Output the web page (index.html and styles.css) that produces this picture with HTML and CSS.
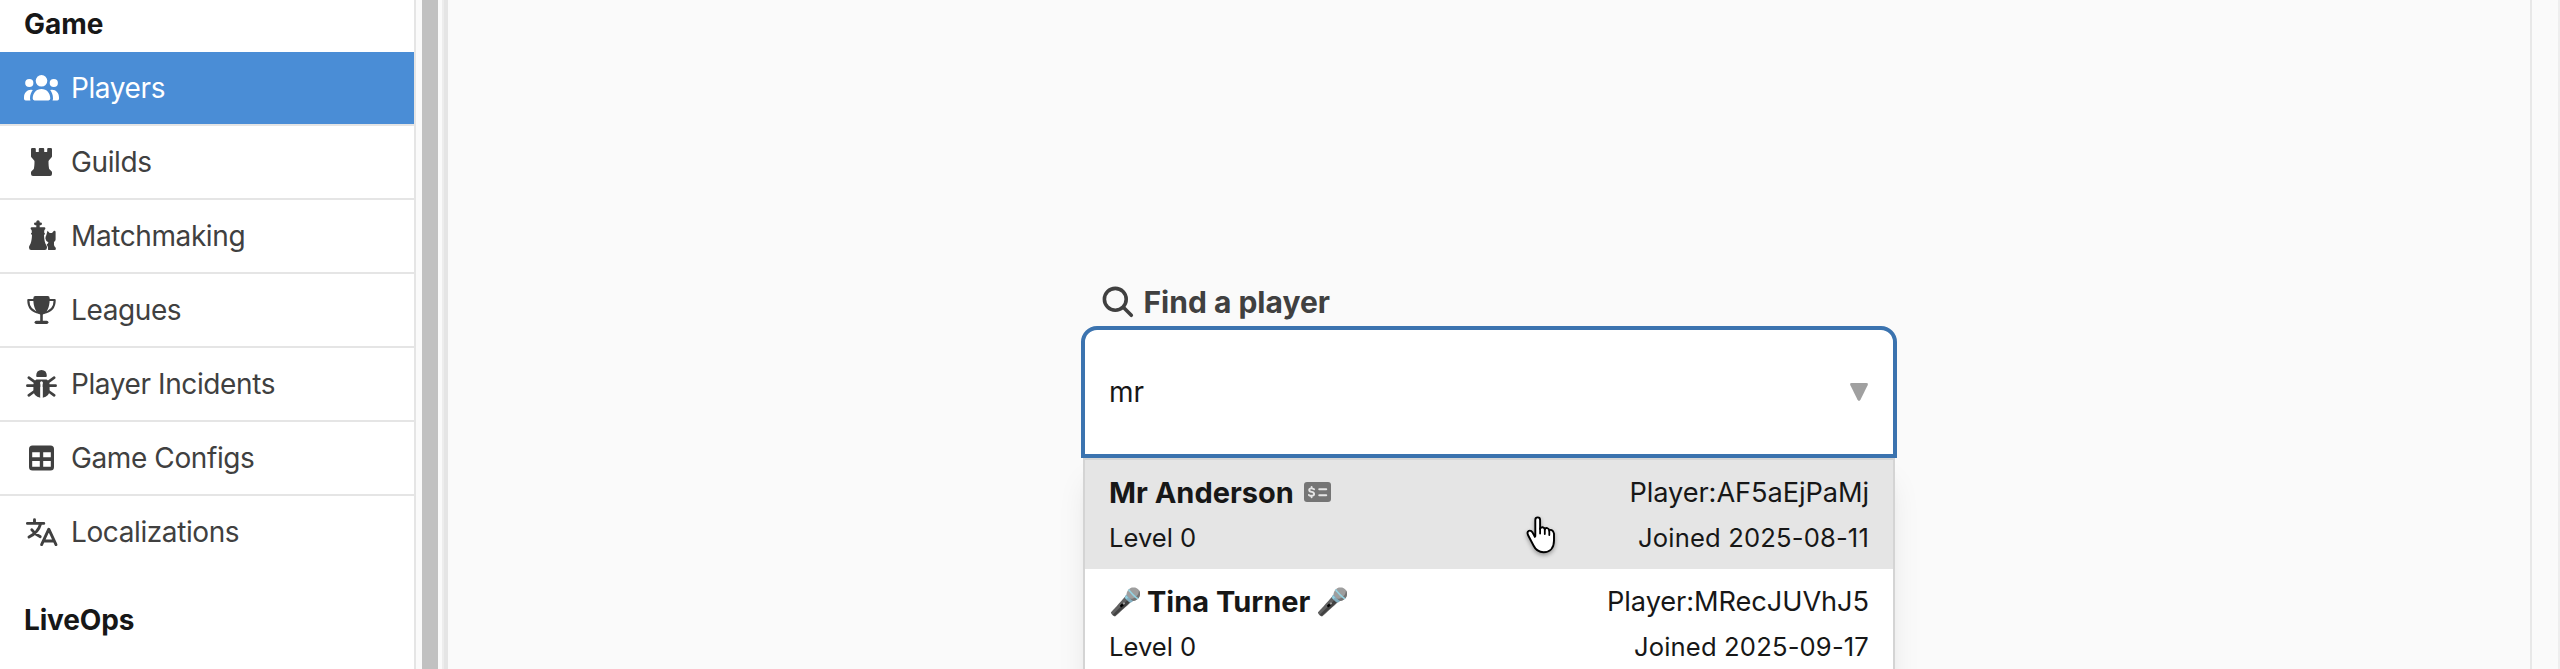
FILE: index.html
```
<!DOCTYPE html>
<html lang="en">
<head>
<meta charset="utf-8">
<title>Players</title>
<link rel="stylesheet" href="styles.css">
</head>
<body>
<div class="app">
  <nav class="sidebar">
    <h2 class="section">Game</h2>
    <a class="item active">
      <svg class="icon" viewBox="0 0 36 36" fill="currentColor"><circle cx="18.5" cy="10.8" r="5.8"/><circle cx="6.3" cy="13" r="4.1"/><circle cx="30.8" cy="13" r="4.1"/><path d="M9.7 28.6C9.7 23.2 13.2 19 18.5 19s8.8 4.2 8.8 9.6q0 1.800-1.800 1.800h-14q-1.800 0-1.800-1.800zM9.800 19.900C8.200 22 7 24.800 7 28.200q0 1.200.5 2.200H2.700Q1 30.400 1 28.700V27.400C1 23 4 19.800 8 19.800q1 0 1.800.1zM27.200 19.900c1.600 2.100 2.800 4.900 2.800 8.300q0 1.200-.5 2.200h4.800q1.700 0 1.700-1.700V27.400c0-4.400-3-7.600-7-7.600q-1 0-1.800.1z"/></svg>
      <span>Players</span>
    </a>
    <a class="item">
      <svg class="icon" viewBox="0 0 36 36" fill="currentColor"><path d="M9.200 4h2.600q1 0 1 1v2.500q0 .6.600.6h1.800q.6 0 .6-.6V5q0-1 1-1h3.400q1 0 1 1v2.500q0 .6.600.6h1.800q.6 0 .6-.6V5q0-1 1-1h2.600q1.200 0 1.200 1.200v7q0 .8-.6 1.400l-2.400 2.600q-.6.600-.5 1.400c0 3 .2 5 .7 7.400l2.300 2.200q.5.500.5 1.200v1.600q0 2-2 2H10q-2 0-2-2v-1.600q0-.7.5-1.200l2.300-2.200c.5-2.400.7-4.400.7-7.400q.1-.8-.5-1.400l-2.400-2.600Q8 13 8 12.200v-7Q8 4 9.200 4z"/></svg>
      <span>Guilds</span>
    </a>
    <a class="item">
      <svg class="icon" viewBox="0 0 36 36" fill="currentColor"><path d="M15 2.200q1.700 0 1.700 1.600v.6h.9q1.400 0 1.400 1.400t-1.400 1.400h-.9v2h4.500q1.200 0 1.200 1.300 0 1-1 1.400l-.3 2.700q.8.300.8 1.200 0 .8-.9 1.100c.1 3.200.5 6.100 1.500 8.900l1.200 2.300q.3.600.3 1.300 0 2.600-2.200 2.600H8.200Q6 32 6 29.400q0-.7.300-1.300l1.200-2.300c1-2.800 1.400-5.700 1.500-8.900-1.300-.4-1.300-1.800-.1-2.300l-.3-2.700q-1-.4-1-1.400 0-1.300 1.200-1.300h4.500v-2h-.9Q11 7.200 11 5.800t1.400-1.400h.9v-.6Q13.300 2.200 15 2.200z"/><path d="M24.500 12.800l2.200 2.300h2.300l2-2.300q1.600-.2 1.600 1.200v7.200q0 1-.6 1.700l-1 1.200q-.3 3 .6 4.400 1.300 1 1.300 2.200 0 1.300-1.200 1.300h-6.500q-.2-.5-.2-1.500 0-2-1.300-4 1.600-.9 1.700-2.200-2.800-1.500-3-3.900 0-1.700.9-3.100z"/></svg>
      <span>Matchmaking</span>
    </a>
    <a class="item">
      <svg class="icon" viewBox="0 0 36 36" fill="currentColor"><path d="M12.300 4h12.400q2 0 2 2.400c0 9.200-2.700 14.800-8.200 16.600C13 21.200 10.300 15.600 10.300 6.400q0-2.400 2-2.400z"/><path d="M11 8H5.300C5.300 14.700 8.700 19.700 16.500 20.900M26 8h5.700C31.700 14.700 28.300 19.700 20.500 20.900" fill="none" stroke="currentColor" stroke-width="2.100" stroke-linejoin="round"/><path d="M17.200 21.500h2.600v8h-2.600z"/><rect x="11.600" y="28.700" width="13.800" height="3.300" rx="1.650"/></svg>
      <span>Leagues</span>
    </a>
    <a class="item">
      <svg class="icon" viewBox="0 0 36 36" fill="currentColor"><path d="M13.200 10q0-6 5.300-6t5.300 6q0 .9-.9.900h-8.800q-.9 0-.9-.9z"/><path d="M13.400 13.400h10.200q3 1.600 3 5.600v5q0 6.600-7 7.700V16.500q0-1-1.100-1t-1.100 1v15.200q-7-1.100-7-7.700v-5q0-4 3-5.600z"/><path d="M4.400 19.700h28.200M5.800 11.700l6.500 4.700M31.200 11.700l-6.500 4.700M5.800 29.300l6-4.300M31.200 29.300l-6-4.300" fill="none" stroke="currentColor" stroke-width="2.700" stroke-linecap="round"/><path class="slit" d="M17.400 31.800V16.500q0-1 1.100-1t1.100 1v15.300z"/></svg>
      <span>Player Incidents</span>
    </a>
    <a class="item">
      <svg class="icon" viewBox="0 0 36 36" fill="currentColor"><path fill-rule="evenodd" d="M9.500 5.500h18q3.500 0 3.500 3.500v18q0 3.500-3.500 3.500h-18Q6 30.500 6 27V9q0-3.500 3.500-3.500zM9.200 12.300v5h7.600v-5zM20.200 12.300v5h7.600v-5zM9.200 21v5.700h7.600V21zM20.200 21v5.700h7.600V21z"/></svg>
      <span>Game Configs</span>
    </a>
    <a class="item last">
      <svg class="icon" viewBox="0 0 36 36" fill="none" stroke="currentColor" stroke-width="2.900" stroke-linecap="round" stroke-linejoin="round"><path d="M4.400 9.400h16.400M11.500 5.800v3.200M17.600 9.800C16 15.600 12 20 6 23M8.800 15.700C11 19 14 21.300 17.200 22.700M18.600 30.600l7.200-15.400 7.200 15.400M20.800 27h10"/></svg>
      <span>Localizations</span>
    </a>
    <h2 class="section later">LiveOps</h2>
  </nav>
  <div class="scroll-track"><div class="thumb"></div></div>
  <main class="content">
    <div class="finder">
      <label class="label">
        <svg class="search" viewBox="0 0 32 32" fill="none" stroke="currentColor" stroke-width="3.600" stroke-linecap="round"><circle cx="13.300" cy="13.300" r="10.900"/><path d="M21.300 21.300l8 8"/></svg>
        <span>Find a player</span>
      </label>
      <div class="field">
        <span>mr</span>
        <svg class="caret" viewBox="0 0 18 18"><path d="M1.600 0h14.800q2.200 0 1.200 2.200l-7 14.400q-1.600 2.800-3.200 0L.4 2.200Q-.6 0 1.600 0z" fill="#a0a0a0"/></svg>
      </div>
      <div class="menu">
        <div class="option hover">
          <div class="row name"><b>Mr Anderson
            <svg class="badge" viewBox="0 0 27 20"><rect width="27" height="20" rx="3" fill="#757575"/><path d="M15.300 7.200h6.900M15.300 13.200h6.900" stroke="#e5e5e5" stroke-width="2.100" stroke-linecap="round"/><path d="M10.100 7.200Q8.700 6.400 7.300 6.400 5.200 6.400 5.200 8T7.600 9.900 10.100 12 7.600 13.800 4.900 12.900M7.600 4.900v1.500M7.600 13.800v1.500" fill="none" stroke="#e5e5e5" stroke-width="1.900" stroke-linecap="round"/></svg></b>
            <span class="id">Player:AF5aEjPaMj</span></div>
          <div class="row meta"><span>Level 0</span><span class="date">Joined 2025-08-11</span></div>
          <svg class="pointer" viewBox="0 0 30 38"><path d="M9.300 20.500V3.900Q9.300 1.400 11.700 1.400T14.100 3.900V13Q14.600 11 16.600 11.200T18.800 13.400Q19.300 11.700 21.200 12.200T23.300 14.600Q24 13.400 25.700 14.200T28 17.600V24.500C28 32 24 36.200 17.600 36.200 12.500 36.200 9.500 33.700 7.500 29.500L2 19Q.7 15.900 2.800 14.900T6.600 16.600L9.300 21.500" fill="#fff" stroke="#000" stroke-width="1.900" stroke-linejoin="round"/><path d="M14.100 12.500v5M18.800 13.500v4.600M23.300 14.500v4.600" stroke="#000" stroke-width="1.800" stroke-linecap="round"/></svg>
        </div>
        <div class="option">
          <div class="row name"><b class="singer"><span class="mic">🎤</span>Tina Turner<span class="mic">🎤</span></b><span class="id">Player:MRecJUVhJ5</span></div>
          <div class="row meta"><span>Level 0</span><span class="date">Joined 2025-09-17</span></div>
        </div>
      </div>
    </div>
  </main>
  <div class="gutter"></div>
</div>
</body>
</html>
```

FILE: styles.css
```
* { box-sizing: border-box; }
body {
  margin: 0;
  background: #fafafa;
  font-family: Inter, "Noto Sans", sans-serif;
  font-size: 28px;
  color: #171717;
}
.app { display: flex; height: 669px; overflow: hidden; }

.sidebar {
  width: 416px;
  flex: none;
  background: #fff;
  border-right: 2px solid #e5e5e5;
}
.section {
  margin: 0;
  padding: 0 24px;
  height: 52px;
  font-size: 28px;
  font-weight: 700;
  line-height: 48px;
}
.section.later { padding-top: 26px; letter-spacing: -0.15px; }
.item {
  display: flex;
  align-items: center;
  gap: 12px;
  height: 74px;
  padding-left: 23px;
  border-bottom: 2px solid #e5e5e5;
  color: #404040;
  letter-spacing: -0.4px;
}
.item.last { border-bottom-color: transparent; }
.item.active { background: #4a8dd6; background-clip: padding-box; color: #fff; }
.icon { width: 36px; height: 36px; flex: none; }
.slit { fill: #fff; }

.scroll-track {
  width: 32px;
  flex: none;
  padding-left: 6px;
  border-right: 4px solid #e5e5e5;
  box-shadow: inset -2px 0 0 #ededed;
}
.thumb { width: 16px; height: 100%; background: #c1c1c1; }
.content { flex: 1; border-right: 2px solid #e8e8e8; }
.gutter { width: 28px; flex: none; border-right: 2px solid #eee; }

.finder { width: 816px; margin: 282px 0 0 633px; }
.label {
  display: flex;
  align-items: center;
  gap: 9.5px;
  height: 44px;
  padding: 0 0 4px 21px;
  font-size: 30px;
  font-weight: 700;
  color: #404040;
}
.search { width: 32px; height: 32px; }
.field {
  display: flex;
  align-items: center;
  justify-content: space-between;
  height: 132px;
  padding: 0 25px 0 24px;
  border: 4px solid #3b73af;
  border-radius: 16px 16px 0 0;
  background: #fff;
}
.caret { width: 18px; height: 18px; }
.menu {
  margin: 0 2px;
  height: 240px;
  border: 2px solid #d4d4d4;
  background: #fff;
  box-shadow: 0 20px 30px -6px rgba(0, 0, 0, .1), 0 8px 12px -8px rgba(0, 0, 0, .1);
}
.option { position: relative; height: 109px; padding: 10px 24px; }
.option.hover { background: #e5e5e5; }
.row { display: flex; justify-content: space-between; }
.name { height: 45px; line-height: 45px; font-size: 29px; }
.id { font-size: 27.2px; letter-spacing: -0.07px; }
.meta { height: 46px; line-height: 46px; font-size: 25.6px; }
.date { letter-spacing: 0.15px; }
.badge { width: 27px; height: 20px; margin-left: 3px; vertical-align: 1px; }
.singer { display: flex; gap: 6px; }
.mic { width: 32px; font-size: 26.5px; }
.pointer {
  position: absolute;
  left: 441px;
  top: 56px;
  width: 30px;
  height: 38px;
  overflow: visible;
  filter: drop-shadow(0 2px 2px rgba(0, 0, 0, .35));
}
```
